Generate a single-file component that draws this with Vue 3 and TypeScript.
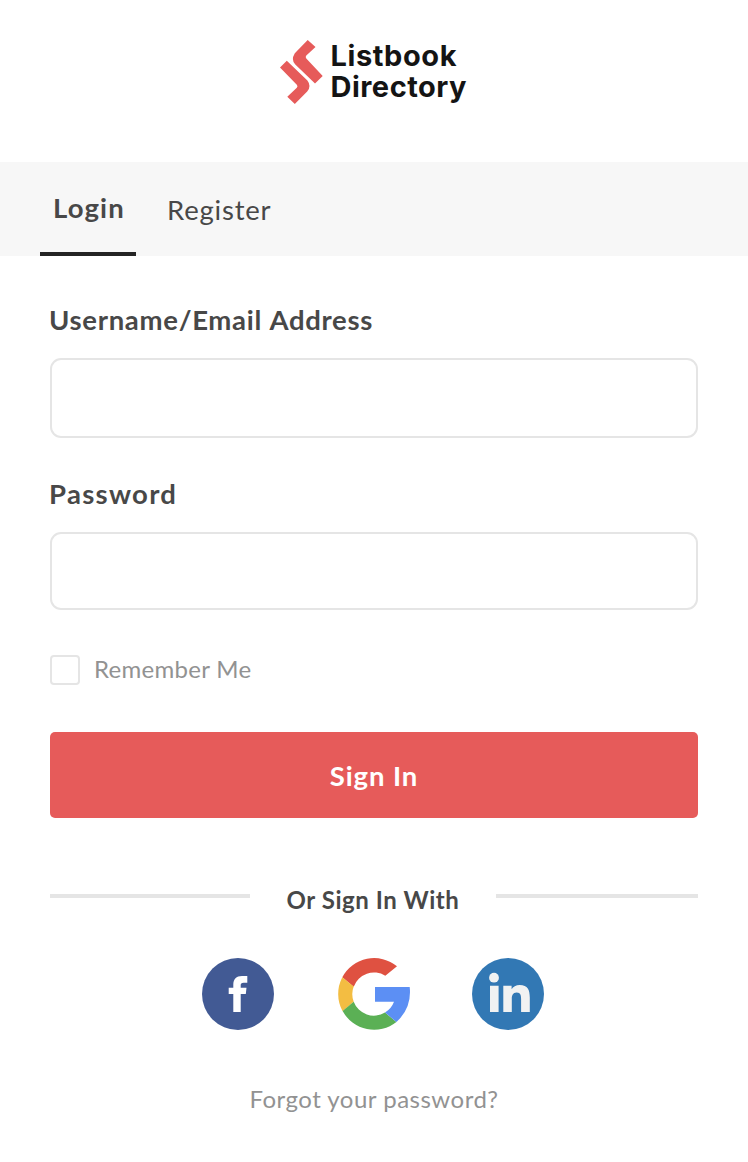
<script setup lang="ts">
import { ref } from 'vue'

const username = ref('')
const password = ref('')
const remember = ref(false)
</script>

<template>
  <main class="page">
    <header class="brand">
      <svg width="192" height="72" viewBox="0 0 192 72" role="img" aria-label="Listbook Directory">
        <g fill="#e65b5a">
          <path d="M27.7 0 35.5 6.9 26.3 15.6Q25 17 26.3 18.4L42.7 36 35 43.4 15.3 24.5Q10.7 20 14.8 13.2Z" />
          <path d="M6.8 20.7 0 27.4 16.8 44.8Q18.2 46.3 16.8 47.7L7.3 56.8 14.8 64 27.2 51.5Q31.7 46 27.4 40.4Z" />
        </g>
        <g class="brand-name">
          <text x="50.5" y="26.3" textLength="126">Listbook</text>
          <text x="50.5" y="57" textLength="136">Directory</text>
        </g>
      </svg>
    </header>

    <nav class="tabs">
      <a class="tab active">Login</a>
      <a class="tab register">Register</a>
    </nav>

    <form class="form" @submit.prevent>
      <label class="label user-label" for="username">Username/Email Address</label>
      <input id="username" v-model="username" class="input" type="text" />
      <label class="label pass-label" for="password">Password</label>
      <input id="password" v-model="password" class="input short" type="password" />

      <label class="remember">
        <input v-model="remember" class="check" type="checkbox" />
        <span>Remember Me</span>
      </label>

      <button class="submit" type="submit"><span>Sign In</span></button>

      <div class="divider">
        <i class="rule left"></i>
        <span class="or">Or Sign In With</span>
        <i class="rule right"></i>
      </div>

      <div class="social">
        <svg width="72" height="72" viewBox="0 0 72 72">
          <circle cx="36" cy="36" r="36" fill="#425a94" />
          <path fill="#fff" d="M31.3 54V36h-4.6v-6.3h4.6v-2.9c0-5.8 3-8.8 8.7-8.8h5.3v6.7h-3.7c-2.3 0-2.9.8-2.9 2.6v2.4h5.8l-.7 6.3h-5.1v18z" />
        </svg>
        <svg class="google" width="72" height="72" viewBox="0 0 72 72">
          <path fill="#df5141" d="M4.3 19.3A36 36 0 0 1 59 8.3L47.3 17.7A21.5 21.5 0 0 0 15.7 28.7Z" />
          <path fill="#f3bd42" d="M4.3 19.3 15.7 28.5A21.5 21.5 0 0 0 15.7 43.7L4.6 53.3A36 36 0 0 1 4.3 19.3Z" />
          <path fill="#5bb055" d="M4.6 53.1 15.7 43.7A21.5 21.5 0 0 0 47 54.5L58.4 64A36 36 0 0 1 4.6 53.1Z" />
          <path fill="#5c8ff4" d="M37 29H71.7Q74 50 58.4 64L47 54.5Q53.5 50.5 56 43.7H37Z" />
        </svg>
        <svg width="72" height="72" viewBox="0 0 72 72">
          <circle cx="36" cy="36" r="36" fill="#3278b4" />
          <g fill="#f1f2f2">
            <circle cx="22" cy="19.7" r="4.9" />
            <path d="M18 27.7h8.6V54H18zM31.3 27.7h8.3v3.6c1.5-2.8 4.4-4.4 8.1-4.4 8.2 0 10.1 5.2 10.1 12.6V54h-8.7V41.2c0-3.6-.4-6.8-4.4-6.8s-4.9 3.1-4.9 6.6v13h-8.5z" />
          </g>
        </svg>
      </div>

      <a class="forgot"><span>Forgot your password?</span></a>
    </form>
  </main>
</template>

<style>
body {
  margin: 0;
  background: #fff;
}
</style>

<style scoped>
.page {
  width: 748px;
  height: 1162px;
  background: #fff;
  color: #484848;
  font-family: Lato, "Open Sans", sans-serif;
  overflow: hidden;
}
.page * {
  box-sizing: border-box;
}
.brand {
  height: 162px;
  padding: 40px 0 0 280px;
}
.brand svg,
.social svg {
  display: block;
  overflow: visible;
}
.brand-name {
  font: 700 29px Inter, sans-serif;
  fill: #141414;
}
.tabs {
  display: flex;
  height: 94px;
  padding-left: 40px;
  background: #f7f7f7;
  font-size: 27.5px;
}
.tab {
  line-height: 92px;
}
.active {
  width: 96px;
  padding-left: 13px;
  border-bottom: 4px solid #242424;
  font-weight: 700;
  letter-spacing: 1.1px;
}
.register {
  margin-left: 31px;
  padding-top: 2px;
  letter-spacing: 0.8px;
}
.form {
  display: flex;
  flex-direction: column;
  padding: 0 50px;
}
.label {
  font-size: 27.5px;
  font-weight: 700;
  line-height: 34px;
}
.user-label {
  margin: 47px 0 21px -1px;
  letter-spacing: 0.7px;
  word-spacing: 1px;
}
.pass-label {
  margin: 39px 0 21px -1px;
  letter-spacing: 1.3px;
}
.input {
  width: 648px;
  height: 80px;
  padding: 0 20px;
  border: 2px solid #e5e5e5;
  border-radius: 11px;
  background: #fff;
  font: 28px Lato, sans-serif;
  outline: none;
}
.input.short {
  height: 78px;
}
.remember {
  display: flex;
  align-items: center;
  height: 30px;
  margin-top: 45px;
  color: #929292;
  font-size: 24px;
  letter-spacing: 0.3px;
}
.remember span {
  padding-bottom: 3px;
}
.check {
  appearance: none;
  width: 30px;
  height: 30px;
  margin: 0 14px 0 0;
  border: 2px solid #e5e5e5;
  border-radius: 4px;
  background: #fff;
}
.submit {
  height: 86px;
  margin-top: 47px;
  padding: 1px 0 0;
  border: 0;
  border-radius: 5px;
  background: #e65b5a;
  color: #fff;
  font: 700 27.5px Lato, sans-serif;
  letter-spacing: 0.9px;
}
.divider {
  display: flex;
  align-items: center;
  height: 40px;
  margin-top: 58px;
}
.rule {
  height: 4px;
  background: #e5e5e5;
}
.left {
  width: 200px;
}
.right {
  width: 202px;
}
.or {
  width: 246px;
  padding-top: 6px;
  text-align: center;
  font-size: 24px;
  font-weight: 700;
  letter-spacing: 0.55px;
}
.divider + .social {
  margin-top: 42px;
}
.social {
  display: flex;
  padding-left: 152px;
}
.google {
  margin: 0 62px 0 64px;
}
.forgot {
  margin-top: 53px;
  text-align: center;
  color: #929292;
  font-size: 24px;
  line-height: 32px;
  letter-spacing: 0.5px;
}
</style>
